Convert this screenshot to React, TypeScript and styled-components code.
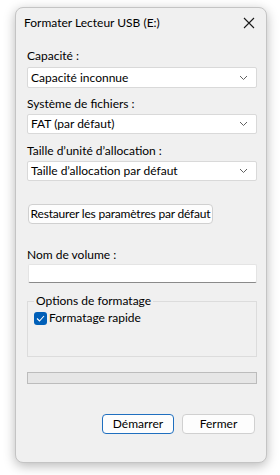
import React from "react";
import styled, { createGlobalStyle } from "styled-components";

const Global = createGlobalStyle`
  html, body { margin: 0; padding: 0; background: #ffffff; }
  body { font-family: "Lato", "Liberation Sans", sans-serif; font-size: 12px; color: #000; }
  * { box-sizing: border-box; }
`;

const Stage = styled.div`
  width: 280px;
  height: 475px;
  padding: 7px 13px 0 15px;
`;

const Window = styled.div`
  width: 252px;
  height: 456px;
  background: #f0f0f0;
  border: 1px solid #c4c4c4;
  border-radius: 8px;
  box-shadow: 0 3px 12px rgba(0, 0, 0, 0.28);
  display: flex;
  flex-direction: column;
`;

const TitleBar = styled.div`
  height: 30px;
  display: flex;
  align-items: center;
  justify-content: space-between;
  padding: 0 8px 0 8px;
`;

const Title = styled.span`
  font-size: 12px;
  line-height: 16px;
`;

const Close = styled.span`
  width: 16px;
  height: 16px;
  display: flex;
  align-items: center;
  justify-content: center;
  margin-right: 1px;
`;

const Content = styled.div`
  display: flex;
  flex-direction: column;
  padding: 10px 9px 0 11px;
`;

const Label = styled.div<{ $mt?: number }>`
  line-height: 16px;
  margin-top: ${(p) => p.$mt ?? 0}px;
`;

const Select = styled.div<{ $mt?: number; $h?: number }>`
  height: ${(p) => p.$h ?? 20}px;
  margin-top: ${(p) => p.$mt ?? 2}px;
  background: #ffffff;
  border: 1px solid #d9d9d9;
  border-radius: 2px;
  display: flex;
  align-items: center;
  justify-content: space-between;
  padding: 0 8px 0 3px;
  line-height: 16px;
`;

const Button = styled.div<{ $primary?: boolean; $w: number; $tight?: boolean }>`
  width: ${(p) => p.$w}px;
  height: 20px;
  background: #fdfdfd;
  border: 1px solid ${(p) => (p.$primary ? "#1f6fbf" : "#d0d0d0")};
  border-radius: 4px;
  display: flex;
  align-items: center;
  justify-content: center;
  line-height: 16px;
  white-space: nowrap;
  letter-spacing: ${(p) => (p.$tight ? "-0.2px" : "0")};
`;

const RestoreRow = styled.div`
  margin-top: 23px;
  padding-left: 1px;
  display: flex;
`;

const TextInput = styled.div`
  height: 19px;
  margin-top: 1px;
  margin-left: 1px;
  background: #ffffff;
  border: 1px solid #e4e4e4;
  border-bottom: 1px solid #8a8a8a;
  border-radius: 2px;
`;

const Group = styled.div`
  position: relative;
  margin-top: 18px;
  height: 56px;
  border: 1px solid #dcdcdc;
  padding: 8px 0 0 6px;
`;

const Legend = styled.span`
  position: absolute;
  top: -9px;
  left: 6px;
  padding: 0 2px;
  background: #f0f0f0;
  line-height: 16px;
`;

const CheckRow = styled.div`
  display: flex;
  align-items: center;
  gap: 2px;
  line-height: 16px;
`;

const CheckBox = styled.span`
  width: 13px;
  height: 13px;
  border-radius: 3px;
  background: #005fb8;
  display: flex;
  align-items: center;
  justify-content: center;
`;

const Progress = styled.div`
  margin-top: 15px;
  height: 12px;
  background: #e6e6e6;
  border: 1px solid #bcbcbc;
`;

const Footer = styled.div`
  margin-top: 30px;
  display: flex;
  justify-content: flex-end;
  gap: 8px;
  padding-right: 2px;
`;

const Chevron = () => (
  <svg width="9" height="6" viewBox="0 0 9 6">
    <path d="M1 1 L4.5 4.5 L8 1" fill="none" stroke="#606060" strokeWidth="1" />
  </svg>
);

export default function App() {
  return (
    <>
      <Global />
      <Stage>
        <Window>
          <TitleBar>
            <Title>Formater Lecteur USB (E:)</Title>
            <Close>
              <svg width="12" height="12" viewBox="0 0 12 12">
                <path d="M1 1 L11 11 M11 1 L1 11" stroke="#1a1a1a" strokeWidth="1.1" />
              </svg>
            </Close>
          </TitleBar>
          <Content>
            <Label>Capacité :</Label>
            <Select $mt={3} $h={21}>
              <span>Capacité inconnue</span>
              <Chevron />
            </Select>
            <Label $mt={8}>Système de fichiers :</Label>
            <Select>
              <span>FAT (par défaut)</span>
              <Chevron />
            </Select>
            <Label $mt={9}>Taille d’unité d’allocation :</Label>
            <Select>
              <span>Taille d’allocation par défaut</span>
              <Chevron />
            </Select>
            <RestoreRow>
              <Button $w={185} $tight>Restaurer les paramètres par défaut</Button>
            </RestoreRow>
            <Label $mt={23}>Nom de volume :</Label>
            <TextInput />
            <Group>
              <Legend>Options de formatage</Legend>
              <CheckRow>
                <CheckBox>
                  <svg width="9" height="7" viewBox="0 0 9 7">
                    <path d="M1 3.5 L3.5 6 L8 1" fill="none" stroke="#fff" strokeWidth="1.1" />
                  </svg>
                </CheckBox>
                <span>Formatage rapide</span>
              </CheckRow>
            </Group>
            <Progress />
            <Footer>
              <Button $primary $w={72}>Démarrer</Button>
              <Button $w={73}>Fermer</Button>
            </Footer>
          </Content>
        </Window>
      </Stage>
    </>
  );
}
